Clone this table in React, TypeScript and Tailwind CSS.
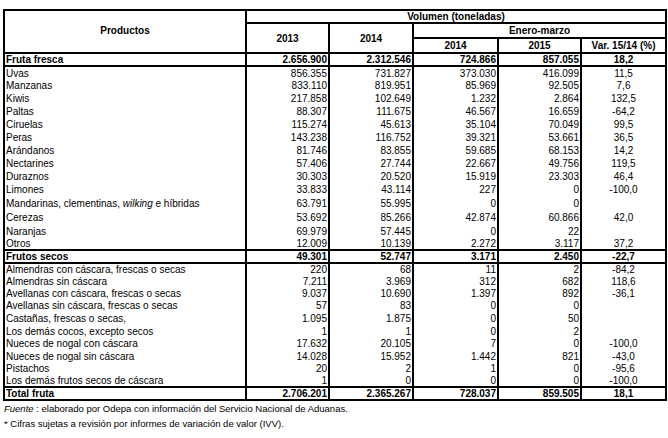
import React from 'react';

type Row = {
  name: React.ReactNode;
  v: string[];
  h: number;
  bold?: boolean;
};

const rows: Row[] = [
  { name: 'Fruta fresca', v: ['2.656.900', '2.312.546', '724.866', '857.055', '18,2'], h: 13, bold: true },
  { name: 'Uvas', v: ['856.355', '731.827', '373.030', '416.099', '11,5'], h: 13 },
  { name: 'Manzanas', v: ['833.110', '819.951', '85.969', '92.505', '7,6'], h: 13 },
  { name: 'Kiwis', v: ['217.858', '102.649', '1.232', '2.864', '132,5'], h: 13 },
  { name: 'Paltas', v: ['88.307', '111.675', '46.567', '16.659', '-64,2'], h: 13 },
  { name: 'Ciruelas', v: ['115.274', '45.613', '35.104', '70.049', '99,5'], h: 13 },
  { name: 'Peras', v: ['143.238', '116.752', '39.321', '53.661', '36,5'], h: 13 },
  { name: 'Arándanos', v: ['81.746', '83.855', '59.685', '68.153', '14,2'], h: 13 },
  { name: 'Nectarines', v: ['57.406', '27.744', '22.667', '49.756', '119,5'], h: 13 },
  { name: 'Duraznos', v: ['30.303', '20.520', '15.919', '23.303', '46,4'], h: 13 },
  { name: 'Limones', v: ['33.833', '43.114', '227', '0', '-100,0'], h: 13 },
  {
    name: (
      <>
        Mandarinas, clementinas, <i>wilking</i> e híbridas
      </>
    ),
    v: ['63.791', '55.995', '0', '0', ''],
    h: 14,
  },
  { name: 'Cerezas', v: ['53.692', '85.266', '42.874', '60.866', '42,0'], h: 15 },
  { name: 'Naranjas', v: ['69.979', '57.445', '0', '22', ''], h: 13 },
  { name: 'Otros', v: ['12.009', '10.139', '2.272', '3.117', '37,2'], h: 12 },
  { name: 'Frutos secos', v: ['49.301', '52.747', '3.171', '2.450', '-22,7'], h: 12, bold: true },
  { name: 'Almendras con cáscara, frescas o secas', v: ['220', '68', '11', '2', '-84,2'], h: 12 },
  { name: 'Almendras sin cáscara', v: ['7.211', '3.969', '312', '682', '118,6'], h: 12 },
  { name: 'Avellanas con cáscara, frescas o secas', v: ['9.037', '10.690', '1.397', '892', '-36,1'], h: 12 },
  { name: 'Avellanas sin cáscara, frescas o secas', v: ['57', '83', '0', '0', ''], h: 13 },
  { name: 'Castañas, frescas o secas,', v: ['1.095', '1.875', '0', '50', ''], h: 13 },
  { name: 'Los demás cocos, excepto secos', v: ['1', '1', '0', '2', ''], h: 12 },
  { name: 'Nueces de nogal con cáscara', v: ['17.632', '20.105', '7', '0', '-100,0'], h: 13 },
  { name: 'Nueces de nogal sin cáscara', v: ['14.028', '15.952', '1.442', '821', '-43,0'], h: 12 },
  { name: 'Pistachos', v: ['20', '2', '1', '0', '-95,6'], h: 12 },
  { name: 'Los demás frutos secos de cáscara', v: ['1', '0', '0', '0', '-100,0'], h: 13 },
  { name: 'Total fruta', v: ['2.706.201', '2.365.267', '728.037', '859.505', '18,1'], h: 13, bold: true },
];

export default function App() {
  return (
    <div className="w-[668px] h-[438px] bg-white text-black font-['Liberation_Sans',Arial,sans-serif] text-[10px] leading-[11px] pt-[9px] pl-[3px]">
      <table className="w-[662px] table-fixed border-collapse border-2 border-black">
        <colgroup>
          <col className="w-[242px]" />
          <col className="w-[83px]" />
          <col className="w-[84px]" />
          <col className="w-[85px]" />
          <col className="w-[83px]" />
          <col className="w-[85px]" />
        </colgroup>
        <thead className="font-bold">
          <tr className="h-[12px]">
            <th rowSpan={3} className="border-2 border-black text-center align-middle pb-[3px]">
              Productos
            </th>
            <th colSpan={5} className="border-2 border-black text-center">
              Volumen (toneladas)
            </th>
          </tr>
          <tr className="h-[15px]">
            <th rowSpan={2} className="border-2 border-black text-center">
              2013
            </th>
            <th rowSpan={2} className="border-2 border-black text-center">
              2014
            </th>
            <th colSpan={3} className="border-2 border-black text-center">
              Enero-marzo
            </th>
          </tr>
          <tr className="h-[15px]">
            <th className="border-2 border-black text-center">2014</th>
            <th className="border-2 border-black text-center">2015</th>
            <th className="border-2 border-black text-center">Var. 15/14 (%)</th>
          </tr>
        </thead>
        <tbody>
          {rows.map((r, i) => {
            const rowCls = r.bold ? 'font-bold border-y-2 border-black' : '';
            return (
              <tr key={i} className={rowCls} style={{ height: r.h }}>
                <td className="border-x-2 border-black pl-[1px] whitespace-nowrap">{r.name}</td>
                {r.v.map((x, j) => (
                  <td
                    key={j}
                    className={
                      j === 4
                        ? 'border-x-2 border-black text-center'
                        : 'border-x-2 border-black text-right pr-[1px]'
                    }
                  >
                    {x}
                  </td>
                ))}
              </tr>
            );
          })}
        </tbody>
      </table>
      <div className="mt-[2px] pl-[1px] text-[9.5px] leading-[12px]">
        <i>Fuente</i> : elaborado por Odepa con información del Servicio Nacional de Aduanas.
      </div>
      <div className="mt-[3px] pl-[1px] text-[9.5px] leading-[12px]">
        * Cifras sujetas a revisión por informes de variación de valor (IVV).
      </div>
    </div>
  );
}
